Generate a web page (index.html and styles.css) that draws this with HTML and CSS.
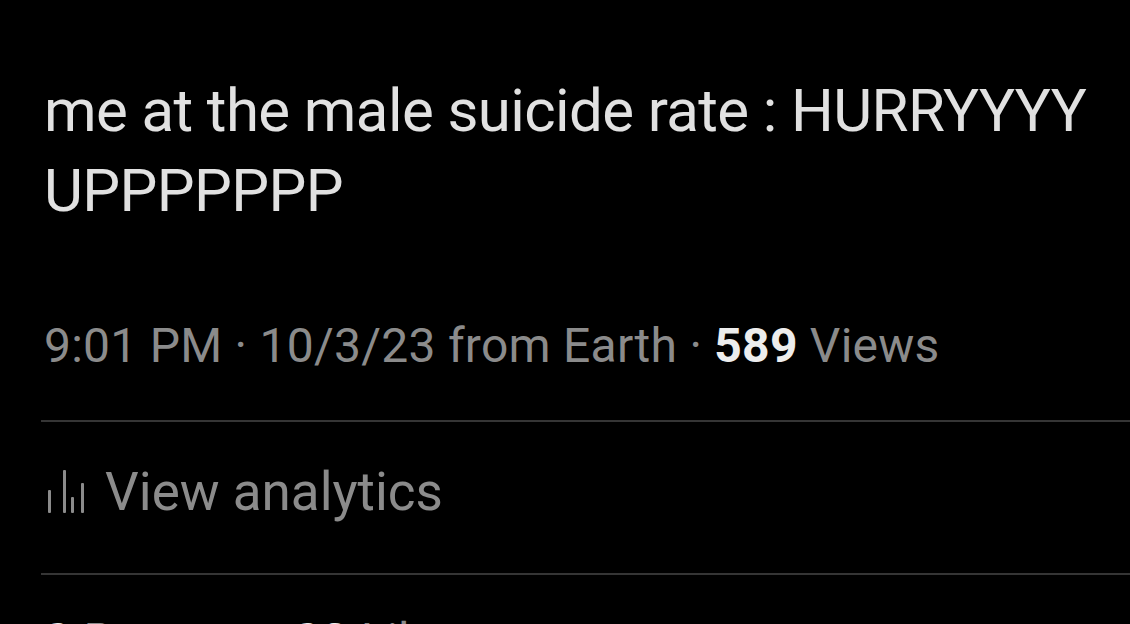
FILE: index.html
```html
<!DOCTYPE html>
<html>
<head>
<meta charset="utf-8">
<link rel="stylesheet" href="styles.css">
</head>
<body>
<main class="tweet">
  <p class="tweet-text">me at the male suicide rate : HURRYYYY UPPPPPPP</p>
  <div class="meta">9:01 PM · 10/3/23 from Earth · <b class="count">589</b> Views</div>
  <div class="row analytics">
    <svg class="icon" width="40" height="43" viewBox="0 0 40 43" aria-hidden="true">
      <rect x="4" y="20" width="3" height="23" rx="1" fill="currentColor"/>
      <rect x="19" y="0" width="3" height="43" rx="1" fill="currentColor"/>
      <rect x="27" y="27" width="3" height="16" rx="1" fill="currentColor"/>
      <rect x="37" y="13" width="3" height="30" rx="1" fill="currentColor"/>
    </svg>
    <span class="row-label">View analytics</span>
  </div>
  <div class="stats"><b>2</b> Reposts &nbsp;&nbsp;<b>23</b> Likes</div>
</main>
</body>
</html>
```

FILE: styles.css
```css
html, body {
  margin: 0;
  background: #000;
  height: 100%;
  overflow: hidden;
}
.tweet {
  font-family: Roboto, "Liberation Sans", sans-serif;
  padding-left: 41px;
  padding-top: 71px;
}
.tweet-text {
  margin: 0;
  padding-left: 3px;
  padding-right: 20px;
  font-size: 60px;
  line-height: 80px;
  letter-spacing: -0.6px;
  color: #e1e1e1;
}
.meta {
  margin-top: 85px;
  padding-left: 3px;
  font-size: 48px;
  line-height: 60px;
  letter-spacing: 0.25px;
  color: #8b8b8b;
  padding-bottom: 44px;
  border-bottom: 2px solid #353535;
}
.count {
  color: #ededed;
  font-weight: 700;
}
.row {
  display: flex;
  align-items: center;
  gap: 21px;
  box-sizing: border-box;
  height: 153px;
  padding-left: 3px;
  padding-bottom: 12px;
  border-bottom: 2px solid #353535;
  font-size: 53px;
  color: #8b8b8b;
}
.icon {
  flex: none;
  color: #8b8b8b;
}
.stats {
  padding-left: 3px;
  padding-top: 36px;
  font-size: 48px;
  line-height: 60px;
  color: #8b8b8b;
}
.stats b {
  color: #ededed;
}
```
